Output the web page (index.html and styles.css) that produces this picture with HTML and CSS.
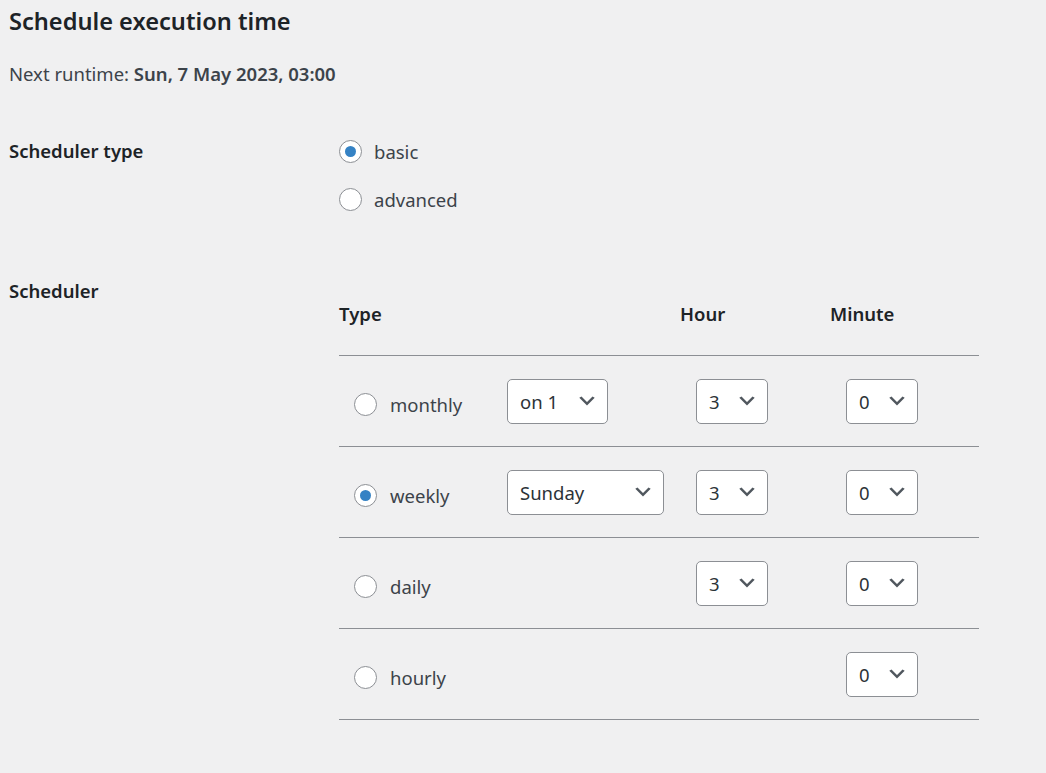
FILE: index.html
```html
<!DOCTYPE html>
<html>
<head>
<meta charset="utf-8">
<link rel="stylesheet" href="styles.css">
</head>
<body>
<div class="page">
  <h2 class="title">Schedule execution time</h2>
  <p class="next">Next runtime: <strong>Sun, 7 May 2023, 03:00</strong></p>

  <div class="form-row row-type">
    <div class="label">Scheduler type</div>
    <div class="options">
      <label class="option"><span class="radio checked"></span><span>basic</span></label>
      <label class="option"><span class="radio"></span><span>advanced</span></label>
    </div>
  </div>

  <div class="form-row row-sched">
    <div class="label">Scheduler</div>
    <div class="sched">
      <div class="srow head">
        <div class="hcell">Type</div>
        <div class="hcell"></div>
        <div class="hcell">Hour</div>
        <div class="hcell">Minute</div>
      </div>
      <div class="srow">
        <div class="cell first"><span class="radio"></span><span>monthly</span></div>
        <div class="cell"><div class="select w-on"><span>on 1</span><svg class="chev" viewBox="0 0 20 20"><path d="M5 6l5 5 5-5 2 1-7 7-7-7 2-1z"/></svg></div></div>
        <div class="cell"><div class="select w-num"><span>3</span><svg class="chev" viewBox="0 0 20 20"><path d="M5 6l5 5 5-5 2 1-7 7-7-7 2-1z"/></svg></div></div>
        <div class="cell"><div class="select w-num"><span>0</span><svg class="chev" viewBox="0 0 20 20"><path d="M5 6l5 5 5-5 2 1-7 7-7-7 2-1z"/></svg></div></div>
      </div>
      <div class="srow">
        <div class="cell first"><span class="radio checked"></span><span>weekly</span></div>
        <div class="cell"><div class="select w-day"><span>Sunday</span><svg class="chev" viewBox="0 0 20 20"><path d="M5 6l5 5 5-5 2 1-7 7-7-7 2-1z"/></svg></div></div>
        <div class="cell"><div class="select w-num"><span>3</span><svg class="chev" viewBox="0 0 20 20"><path d="M5 6l5 5 5-5 2 1-7 7-7-7 2-1z"/></svg></div></div>
        <div class="cell"><div class="select w-num"><span>0</span><svg class="chev" viewBox="0 0 20 20"><path d="M5 6l5 5 5-5 2 1-7 7-7-7 2-1z"/></svg></div></div>
      </div>
      <div class="srow">
        <div class="cell first"><span class="radio"></span><span>daily</span></div>
        <div class="cell"></div>
        <div class="cell"><div class="select w-num"><span>3</span><svg class="chev" viewBox="0 0 20 20"><path d="M5 6l5 5 5-5 2 1-7 7-7-7 2-1z"/></svg></div></div>
        <div class="cell"><div class="select w-num"><span>0</span><svg class="chev" viewBox="0 0 20 20"><path d="M5 6l5 5 5-5 2 1-7 7-7-7 2-1z"/></svg></div></div>
      </div>
      <div class="srow">
        <div class="cell first"><span class="radio"></span><span>hourly</span></div>
        <div class="cell"></div>
        <div class="cell"></div>
        <div class="cell"><div class="select w-num"><span>0</span><svg class="chev" viewBox="0 0 20 20"><path d="M5 6l5 5 5-5 2 1-7 7-7-7 2-1z"/></svg></div></div>
      </div>
    </div>
  </div>
</div>
</body>
</html>
```

FILE: styles.css
```css
html, body {
  margin: 0;
  padding: 0;
  background: #f0f0f1;
}
body {
  font-family: "Noto Sans", "Open Sans", sans-serif;
  font-size: 18.5px;
  line-height: 27px;
  color: #3c434a;
}
.page {
  padding-left: 9px;
}
.title {
  margin: 0;
  padding-top: 6px;
  font-size: 23.6px;
  line-height: 30px;
  font-weight: 600;
  color: #1d2327;
}
.next {
  margin: 0;
  padding-top: 24px;
}
.next strong {
  font-weight: 600;
}
.form-row {
  display: grid;
  grid-template-columns: 330px 640px;
}
.label {
  font-weight: 600;
  color: #1d2327;
}
.row-type {
  margin-top: 40px;
}
.row-type .label {
  padding-top: 10px;
}
.option {
  display: flex;
  align-items: center;
  height: 48px;
  gap: 12px;
}
.radio {
  box-sizing: border-box;
  width: 23px;
  height: 23px;
  border: 1px solid #8c8f94;
  border-radius: 50%;
  background: #fff;
  display: inline-flex;
  align-items: center;
  justify-content: center;
  flex: none;
}
.radio.checked::after {
  content: "";
  width: 11px;
  height: 11px;
  border-radius: 50%;
  background: #3582c4;
}
.row-sched {
  margin-top: 42px;
}
.row-sched .label {
  padding-top: 12px;
}
.srow {
  display: grid;
  grid-template-columns: 152px 189px 150px 149px;
  height: 91px;
  box-sizing: border-box;
  border-bottom: 1px solid #8c8f94;
  align-items: center;
}
.srow.head {
  align-items: start;
}
.hcell {
  padding-top: 35px;
  font-weight: 600;
  color: #1d2327;
}
.cell {
  padding-left: 16px;
  display: flex;
  align-items: center;
}
.cell.first {
  padding-left: 15px;
  gap: 13px;
  padding-top: 6px;
}
.select {
  box-sizing: border-box;
  height: 45px;
  border: 1px solid #8c8f94;
  border-radius: 5px;
  background: #fff;
  display: flex;
  align-items: center;
  justify-content: space-between;
  padding-left: 12px;
  padding-right: 9px;
  color: #2c3338;
}
.chev {
  width: 22px;
  height: 22px;
  fill: #50575e;
}
.w-on { width: 101px; }
.w-day { width: 157px; }
.w-num { width: 72px; }
```
